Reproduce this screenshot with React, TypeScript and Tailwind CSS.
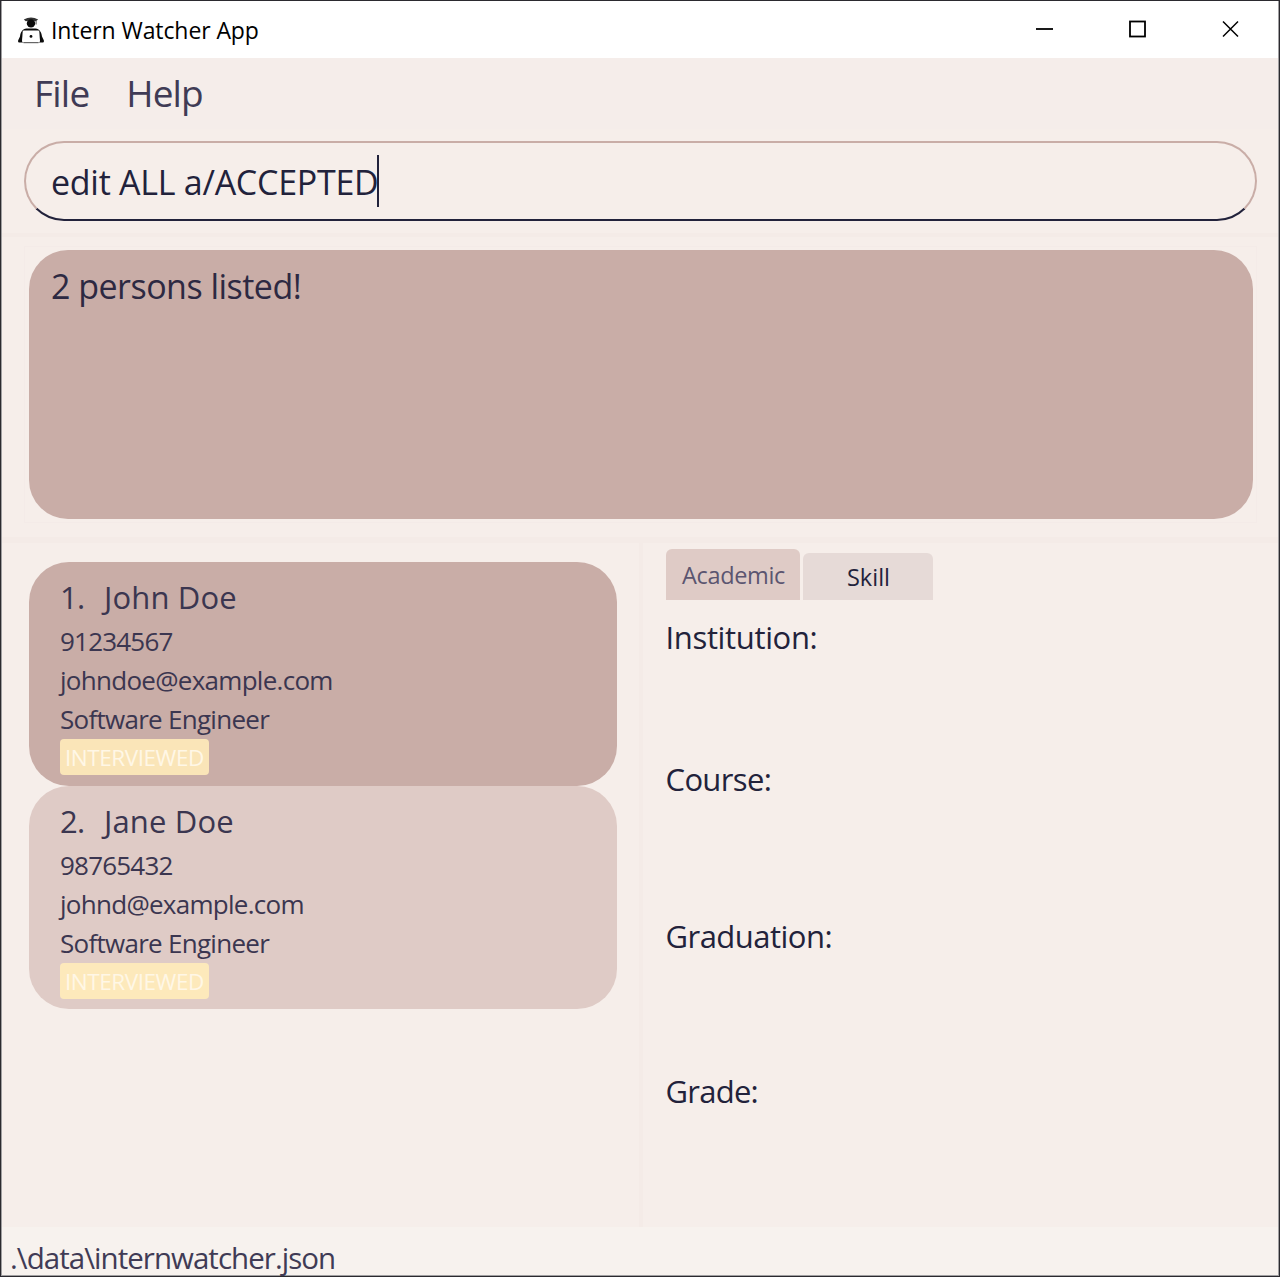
import React from 'react';

type Person = { index: number; name: string; phone: string; email: string; job: string; status: string };

const people: Person[] = [
  { index: 1, name: 'John Doe', phone: '91234567', email: 'johndoe@example.com', job: 'Software Engineer', status: 'INTERVIEWED' },
  { index: 2, name: 'Jane Doe', phone: '98765432', email: 'johnd@example.com', job: 'Software Engineer', status: 'INTERVIEWED' },
];

function AppIcon() {
  return (
    <svg width="28" height="28" viewBox="0 0 28 28" fill="#0c0c0c">
      <path d="M6.800 3.600Q14-.6 21.200 3.600l-1.700 1.200v3.800h-.8V5.200Q14 3.600 8.800 5.200Z" fill="#333" />
      <circle cx="14" cy="7.400" r="4.200" />
      <path d="M3 20.500c.6-5 2.600-7.500 6.400-8.100h9.200c3.800.6 5.800 3.100 6.400 8.100l1.800 3.700c.5 1.500-.2 2.300-1.500 2.300H2.700c-1.300 0-2-.8-1.500-2.300Z" />
      <path d="M6.800 14.500h14.400q1 0 1.100 1l.7 9.600q0 1.400-1.200 1.400H6.200Q5 26.500 5 25.100l.7-9.600q.1-1 1.100-1Z" fill="#fff" />
      <path d="M6.500 26.700h15" stroke="#444" strokeWidth=".9" />
      <circle cx="14" cy="20.400" r="1.400" />
    </svg>
  );
}

function TitleBar() {
  return (
    <header className="flex h-[57px] shrink-0 items-center bg-white pl-[15px]">
      <AppIcon />
      <h1 className="ml-1.5 flex-1 text-[23px] leading-[34px] tracking-[-0.090px] text-black">Intern Watcher App</h1>
      <div className="flex items-center gap-[76px] pr-[39px] pb-0.5">
        <svg width="17" height="18" fill="none" stroke="#000" strokeWidth="1.800">
          <path d="M0 9h17" />
        </svg>
        <svg width="17" height="18" fill="none" stroke="#000" strokeWidth="1.800">
          <rect x="1" y="1.500" width="15" height="15" />
        </svg>
        <svg width="17" height="18" fill="none" stroke="#000" strokeWidth="1.500">
          <path d="m1 1.500 15 15m0-15-15 15" />
        </svg>
      </div>
    </header>
  );
}

function PersonCard({ person, selected }: { person: Person; selected: boolean }) {
  return (
    <li className={`h-[223.700px] rounded-[40px] pt-3 pl-[31px] text-[#3b3650] ${selected ? 'bg-[#c9ada7]' : 'bg-[#dfcbc6]'}`}>
      <div className="flex h-[46px] text-[31px] leading-[47px]">
        <span className="w-11 tracking-[-0.730px]">{person.index}.</span>
        <span className="tracking-[0.150px]">{person.name}</span>
      </div>
      <div className="mt-0.5 text-[26px] leading-[39px] tracking-[-0.720px]">
        <p className="tracking-[-0.800px]">{person.phone}</p>
        <p>{person.email}</p>
        <p>{person.job}</p>
      </div>
      <span className={`block h-9 w-[149px] rounded-[4px] pl-[5px] text-[22.500px] leading-[37px] tracking-[-0.450px] text-[#fff7e6] ${selected ? 'bg-[#fae5b8]' : 'bg-[#fde9bb]'}`}>
        {person.status}
      </span>
    </li>
  );
}

function DetailsPanel() {
  return (
    <section className="flex-1 pt-1.5 pl-[22.500px]">
      <div className="flex h-[51px] items-end gap-[3px] text-[23.500px]">
        <button className="h-[51px] w-[134px] rounded-t-[6px] bg-[#dfcbc6] pt-0.5 pl-[2px] leading-[49px] tracking-[-0.350px] text-[#5b5570]">Academic</button>
        <button className="h-[47px] w-[130px] rounded-t-[6px] bg-[#e6dad7] pt-px pl-0.5 leading-[47px] text-[#22223b]">Skill</button>
      </div>
      <dl className="pt-[15px] text-[31px] leading-[44px] text-[#22223b]">
        <dt className="h-[142px] tracking-[-0.350px]">Institution:</dt>
        <dt className="h-[157px] tracking-[-0.650px]">Course:</dt>
        <dt className="h-[155px] tracking-[-0.520px]">Graduation:</dt>
        <dt className="tracking-[-0.750px]">Grade:</dt>
      </dl>
    </section>
  );
}

export default function App() {
  return (
    <div className="h-[1277px] w-[1280px] border border-[#2b2a2f] font-['Open_Sans',sans-serif]">
      <div className="flex h-full flex-col border-x border-b border-[#a09fa1] bg-[#f6eeea]">
        <TitleBar />
        <nav className="flex h-[71px] shrink-0 gap-[37px] bg-[#f5edea] pl-8 text-[37px] leading-[70px] text-[#403b55]">
          <span className="tracking-[-0.800px]">File</span>
          <span className="tracking-[-0.900px]">Help</span>
        </nav>
        <div className="h-[104px] shrink-0 pt-3 pr-[21px] pl-[22px]">
          <div className="flex h-20 items-center rounded-full border-2 border-t-[#c9ada7] border-r-[#c9ada7] border-b-[#22223b] border-l-[#c9ada7] pl-[25px] text-[34px] text-[#22223b]">
            <span className="pt-0.5 leading-[52px] tracking-[-0.270px]">edit ALL a/ACCEPTED</span>
            <span className="-ml-px h-[52px] w-0.5 bg-[#22223b]" />
          </div>
        </div>
        <div className="h-[304px] shrink-0 border-t-4 border-[#f4ebe7] pt-[9px] pr-[21px] pl-[22px]">
          <div className="h-[277px] border border-[#f4ebe8] p-[3px]">
            <div className="ml-px h-[269px] rounded-[39px] bg-[#c9ada7] pt-[10px] pl-[22px] text-[34px] leading-[52px] tracking-[-0.520px] text-[#2d2942]">2 persons listed!</div>
          </div>
        </div>
        <main className="flex h-[690px] shrink-0 border-t-6 border-[#f4ebe7]">
          <section className="w-[637px] border-r border-[#f6eeea] pt-[19px] pr-[21px] pl-[27px]">
            <ul>
              {people.map((person) => (
                <PersonCard key={person.index} person={person} selected={person.index === 1} />
              ))}
            </ul>
          </section>
          <div className="w-1 bg-[#f4ebe7]" />
          <DetailsPanel />
        </main>
        <footer className="min-h-0 flex-1 basis-0 bg-[#f7f2ee] pl-2 text-[29.500px] leading-[61px] tracking-[-0.960px] text-[#403b55]">{'.\\data\\internwatcher.json'}</footer>
      </div>
    </div>
  );
}
